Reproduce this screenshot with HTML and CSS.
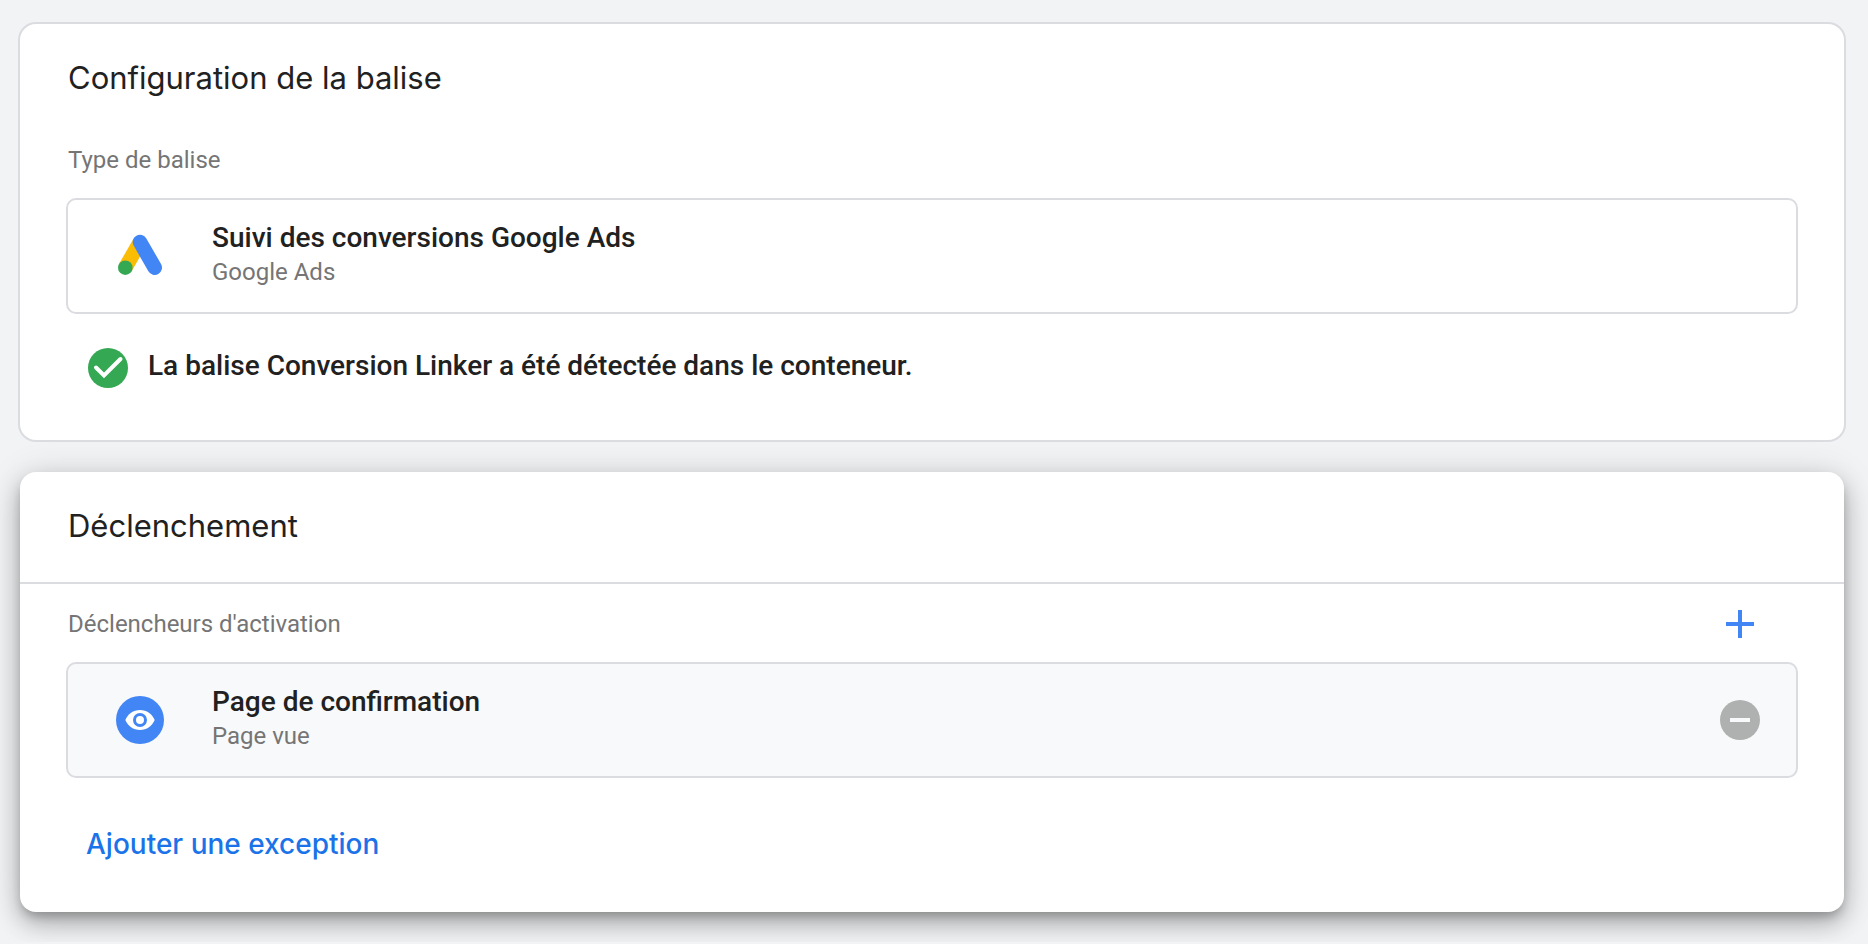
FILE: index.html
```html
<!DOCTYPE html>
<html lang="fr">
<head>
    <meta charset="UTF-8">
    <meta name="viewport" content="width=device-width, initial-scale=1.0">
    <title>Configuration de la balise</title>
    <link rel="stylesheet" href="styles.css">
</head>
<body>
    <main class="container">
        <section class="card">
            <h2 class="card-title">Configuration de la balise</h2>
            <h3 class="section-label">Type de balise</h3>

            <div class="row">
                <svg class="row-icon" viewBox="0 0 48 48" aria-hidden="true">
                    <path d="M24 10 9.300 35.700" stroke="#fbbc04" stroke-width="14.6"/>
                    <path d="M24 10 38.700 35.700" stroke="#4285f4" stroke-width="14.6" stroke-linecap="round"/>
                    <circle cx="9.300" cy="35.700" r="7.300" fill="#34a853"/>
                </svg>
                <div class="row-text">
                    <div class="row-title">Suivi des conversions Google Ads</div>
                    <div class="row-subtitle">Google Ads</div>
                </div>
            </div>

            <div class="status">
                <svg class="status-icon" viewBox="0 0 40 40" aria-hidden="true">
                    <circle cx="20" cy="20" r="20" fill="#34a853"/>
                    <path d="M8 19.500 16 27.500 32.500 11" fill="none" stroke="#fff" stroke-width="4" stroke-linecap="round"/>
                </svg>
                <p class="status-text">La balise Conversion Linker a été détectée dans le conteneur.</p>
            </div>
        </section>

        <section class="card card-active">
            <div class="card-header">
                <h2 class="card-title">Déclenchement</h2>
            </div>

            <div class="section-head">
                <h3 class="section-label">Déclencheurs d'activation</h3>
                <button type="button" class="icon-button" aria-label="Ajouter un déclencheur">
                    <svg viewBox="0 0 40 40" aria-hidden="true">
                        <path d="M6 20H34M20 6V34" stroke="#4285f4" stroke-width="4"/>
                    </svg>
                </button>
            </div>

            <div class="row row-filled">
                <svg class="row-icon" viewBox="0 0 48 48" aria-hidden="true">
                    <circle cx="24" cy="24" r="24" fill="#4285f4"/>
                    <path d="M24 14C17.300 14 11.700 18.100 9.300 24 11.700 29.900 17.300 34 24 34S36.300 29.900 38.700 24C36.300 18.100 30.700 14 24 14Z" fill="#fff"/>
                    <circle cx="24" cy="24" r="5.500" fill="#fff" stroke="#4285f4" stroke-width="3"/>
                </svg>
                <div class="row-text">
                    <div class="row-title">Page de confirmation</div>
                    <div class="row-subtitle">Page vue</div>
                </div>
                <button type="button" class="icon-button" aria-label="Supprimer le déclencheur">
                    <svg viewBox="0 0 40 40" aria-hidden="true">
                        <circle cx="20" cy="20" r="20" fill="#afb1b0"/>
                        <path d="M10 20H30" stroke="#f8f9fa" stroke-width="4"/>
                    </svg>
                </button>
            </div>

            <button type="button" class="text-button">Ajouter une exception</button>
        </section>
    </main>
</body>
</html>
```
FILE: styles.css
```css
* {
    margin: 0;
    padding: 0;
    box-sizing: border-box;
}

body {
    font-family: Roboto, Arial, sans-serif;
    background: #f1f3f4;
    color: #212121;
}

.container {
    padding: 22px 22px 30px 18px;
}

.card {
    background: white;
    border: 2px solid #dadce0;
    border-radius: 18px;
    padding: 34px 46px 52px;
}

.card-active {
    border: none;
    border-radius: 16px;
    margin: 30px 2px 0;
    padding: 0 46px 50px;
    box-shadow: 0 6px 10px -2px rgba(0,0,0,0.2), 0 12px 24px rgba(0,0,0,0.25), 0 2px 36px rgba(0,0,0,0.12);
}

.card-header {
    margin: 0 -46px;
    padding: 34px 46px 36px;
    border-bottom: 2px solid #dadce0;
}

.card-title {
    font-family: Inter, sans-serif;
    font-size: 31px;
    font-weight: 400;
    line-height: 40px;
    padding-left: 2px;
}

.section-label {
    font-size: 24px;
    font-weight: 400;
    line-height: 32px;
    color: #757575;
    padding-left: 2px;
}

.card-title + .section-label {
    margin: 46px 0 22px;
}

.section-head {
    display: flex;
    align-items: center;
    justify-content: space-between;
    padding: 20px 38px 18px 0;
}

.row {
    display: flex;
    align-items: center;
    gap: 48px;
    min-height: 116px;
    padding: 0 36px 0 48px;
    border: 2px solid #dadce0;
    border-radius: 10px;
}

.row-filled {
    background: #f8f9fa;
}

.row-icon {
    width: 48px;
    height: 48px;
    flex-shrink: 0;
}

.row-text {
    flex: 1;
    padding-bottom: 4px;
}

.row-title {
    font-size: 28px;
    font-weight: 500;
    line-height: 36px;
}

.row-subtitle {
    font-size: 24px;
    line-height: 32px;
    color: #757575;
}

.status {
    display: flex;
    gap: 20px;
    margin-top: 34px;
    padding-left: 22px;
}

.status-icon {
    width: 40px;
    height: 40px;
    flex-shrink: 0;
}

.status-text {
    font-size: 28px;
    font-weight: 500;
    line-height: 36px;
}

.icon-button {
    width: 40px;
    height: 40px;
    flex-shrink: 0;
    background: none;
    border: none;
    cursor: pointer;
}

.icon-button svg {
    display: block;
}

.text-button {
    display: block;
    margin-top: 48px;
    padding: 0 20px;
    font-family: Inter, sans-serif;
    font-size: 28px;
    font-weight: 500;
    line-height: 36px;
    color: #1a73e8;
    background: none;
    border: none;
    cursor: pointer;
}
```
